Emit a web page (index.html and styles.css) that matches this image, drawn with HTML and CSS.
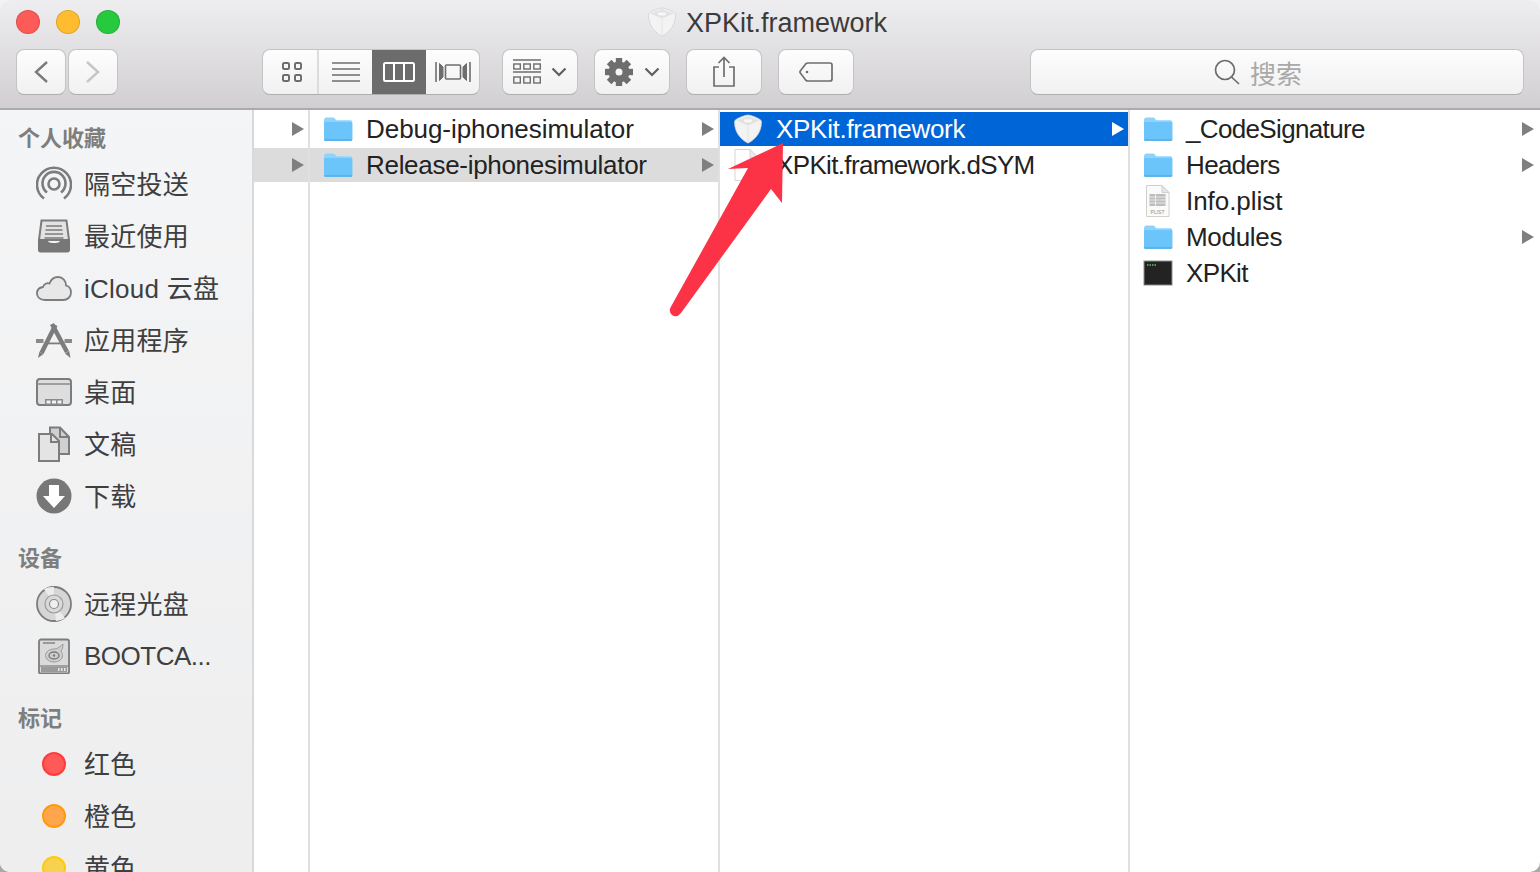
FILE: index.html
```html
<!DOCTYPE html>
<html lang="zh-CN">
<head>
  <meta charset="UTF-8">
  <meta name="viewport" content="width=device-width, initial-scale=1.0">
  <title>XPKit.framework</title>
  <link rel="stylesheet" href="styles.css">
</head>
<body>
  <svg class="defs" width="0" height="0">
    <symbol id="folder" viewBox="0 0 30 24">
      <path d="M1 3.500C1 1.500 2 .5 3.500 .5h6c1.300 0 2 .5 2.800 1.500l.9 1.200H27.500c1 0 1.800.8 1.800 1.800V22c0 1-.8 1.800-1.800 1.800H2.800C1.800 23.800 1 23 1 22z" fill="#8fd3fb"/>
      <path d="M1 6.500c0-.9.6-1.500 1.500-1.500h25c.9 0 1.800.6 1.800 1.500V22c0 1-.8 1.800-1.800 1.800H2.800C1.800 23.800 1 23 1 22z" fill="#6cc5fa"/>
      <path d="M1 22.200h28.300c0 1-.8 1.600-1.800 1.600H2.800c-1 0-1.800-.6-1.800-1.600z" fill="#55aee6"/>
    </symbol>
    <symbol id="cube" viewBox="0 0 30 30">
      <path d="M15 1C18 1 24 3.500 27 5.500 28 6.200 28.500 7 28.500 8 28.500 17 24 24 15.800 28.800 15.300 29.100 14.700 29.100 14.200 28.800 6 24 1.500 17 1.500 8 1.500 7 2 6.200 3 5.500 6 3.500 12 1 15 1z" fill="#f3f3f3" stroke="#cfcfcf" stroke-width=".7"/>
      <path d="M3.500 6.500 15 11.500 26.500 6.500 15 2z" fill="#e2e2e2"/>
      <path d="M15 11.500V28" stroke="#e4e4e4" stroke-width="1"/>
      <path d="M11 5.500h8v2.200c-2 1-6 1-8 0z" fill="#f7f7f7"/>
    </symbol>
    <symbol id="page" viewBox="0 0 26 32">
      <path d="M2 .5H17L25 8.500V31.500H2z" fill="#fff" stroke="#d5d5d5"/>
      <path d="M17 .5V8.500H25z" fill="#ececec" stroke="#d5d5d5"/>
    </symbol>
  </svg>

  <div class="window">
    <header class="toolbar">
      <div class="title-row">
        <div class="lights">
          <span class="light light-red"></span>
          <span class="light light-yellow"></span>
          <span class="light light-green"></span>
        </div>
        <div class="title">
          <svg class="title-icon" width="30" height="30"><use href="#cube"/></svg>
          <span class="title-text">XPKit.framework</span>
        </div>
      </div>
      <div class="tools">
        <div class="nav-group">
          <button class="btn btn-nav">
            <svg width="16" height="24" viewBox="0 0 16 24"><path d="M14 2 3 12l11 10" fill="none" stroke="#7b7b7b" stroke-width="2.400"/></svg>
          </button>
          <button class="btn btn-nav">
            <svg width="16" height="24" viewBox="0 0 16 24"><path d="M2 2l11 10L2 22" fill="none" stroke="#c6c6c6" stroke-width="2.400"/></svg>
          </button>
        </div>
        <div class="btn view-group">
          <span class="view view-icons">
            <svg width="22" height="22" viewBox="0 0 22 22" fill="none" stroke="#6e6e6e" stroke-width="2"><rect x="2" y="2" width="6" height="6" rx="1.200"/><rect x="14" y="2" width="6" height="6" rx="1.200"/><rect x="2" y="14" width="6" height="6" rx="1.200"/><rect x="14" y="14" width="6" height="6" rx="1.200"/></svg>
          </span>
          <span class="view view-list">
            <svg width="30" height="22" viewBox="0 0 30 22" stroke="#6e6e6e" stroke-width="1.500"><path d="M1 2h28M1 8h28M1 14h28M1 20h28"/></svg>
          </span>
          <span class="view view-active">
            <svg width="32" height="20" viewBox="0 0 32 20" fill="none" stroke="#fff" stroke-width="2"><rect x="1" y="1" width="30" height="18" rx="1.500"/><path d="M11 1v18M21 1v18"/></svg>
          </span>
          <span class="view view-flow">
            <svg width="36" height="20" viewBox="0 0 36 20" fill="none" stroke="#6e6e6e" stroke-width="1.600"><path d="M1 0v20M35 0v20"/><rect x="10.500" y="3" width="15" height="14" rx="1"/><path d="M4.500 1.500 8 5v10l-3.500 3.500zM31.500 1.500 28 5v10l3.500 3.500z" fill="#6e6e6e" stroke-width="1"/></svg>
          </span>
        </div>
        <button class="btn btn-tool">
          <svg width="28" height="26" viewBox="0 0 28 26" fill="none" stroke="#6e6e6e" stroke-width="1.400"><path d="M0 1h28M0 13h28" stroke-width="1.600"/><rect x=".8" y="5" width="6.500" height="5"/><rect x="10.800" y="5" width="6.500" height="5"/><rect x="20.800" y="5" width="6.500" height="5"/><rect x=".8" y="18" width="6.500" height="6"/><rect x="10.800" y="18" width="6.500" height="6"/><rect x="20.800" y="18" width="6.500" height="6"/></svg>
          <svg class="chev" width="16" height="10" viewBox="0 0 16 10"><path d="M1.500 1.500 8 8l6.500-6.500" fill="none" stroke="#5f5f5f" stroke-width="2.200"/></svg>
        </button>
        <button class="btn btn-tool">
          <svg width="30" height="30" viewBox="-15 -15 30 30" fill="#6e6e6e"><circle r="10.500"/><rect x="-3.200" y="-14" width="6.400" height="28"/><rect x="-3.200" y="-14" width="6.400" height="28" transform="rotate(45)"/><rect x="-3.200" y="-14" width="6.400" height="28" transform="rotate(90)"/><rect x="-3.200" y="-14" width="6.400" height="28" transform="rotate(135)"/><circle r="3.500" fill="#f6f6f6"/></svg>
          <svg class="chev" width="16" height="10" viewBox="0 0 16 10"><path d="M1.500 1.500 8 8l6.500-6.500" fill="none" stroke="#5f5f5f" stroke-width="2.200"/></svg>
        </button>
        <button class="btn btn-tool">
          <svg width="24" height="32" viewBox="0 0 24 32" fill="none" stroke="#6e6e6e" stroke-width="1.700"><path d="M7 11H2v19h20V11h-5M12 21V2M6.500 7 12 1.500 17.500 7"/></svg>
        </button>
        <button class="btn btn-tool">
          <svg width="34" height="20" viewBox="0 0 34 20" fill="none" stroke="#6e6e6e" stroke-width="1.700"><path d="M9 1h22a2 2 0 0 1 2 2v14a2 2 0 0 1-2 2H9c-1 0-1.500-.3-2.200-.8L1.500 11.200c-.7-.7-.7-1.700 0-2.400L6.800 1.800C7.500 1.300 8 1 9 1z"/><circle cx="8" cy="10" r="1.300" fill="#6e6e6e" stroke="none"/></svg>
        </button>
        <div class="btn search">
          <svg width="26" height="26" viewBox="0 0 26 26" fill="none" stroke="#6b6b6b" stroke-width="1.700"><circle cx="11" cy="11" r="9.500"/><path d="M17.500 18 25 25"/></svg>
          <span>搜索</span>
        </div>
      </div>
    </header>

    <div class="browser">
      <aside class="sidebar">
        <h4 class="side-head">个人收藏</h4>
        <div class="side-row">
          <svg class="side-icon" viewBox="0 0 36 36" fill="none" stroke="#7c7c7c" stroke-width="2.600"><path d="M8 32.500a17 17 0 1 1 20 0"/><path d="M11 26.500a11.500 11.500 0 1 1 14 0"/><circle cx="18" cy="18" r="5.500"/></svg>
          <span class="side-text">隔空投送</span>
        </div>
        <div class="side-row">
          <svg class="side-icon" viewBox="0 0 36 36"><path d="M5.500 2.500h25L33 22H3z" fill="#e3e3e3" stroke="#7c7c7c" stroke-width="2"/><path d="M10 8h16M9.500 12h17M9 16h18M8.500 20h19" stroke="#7c7c7c" stroke-width="1.500"/><path d="M2 21h9c1 3 2 4 7 4s6-1 7-4h9v11c0 1.500-1 2.500-2.500 2.500h-27C3 34.500 2 33.500 2 32z" fill="#777"/></svg>
          <span class="side-text">最近使用</span>
        </div>
        <div class="side-row">
          <svg class="side-icon" viewBox="0 0 36 36"><path d="M9 30C4 30 1 27 1 23.500S3.500 17.500 7 17c1-3 4-4.500 6.500-3.500C15 9.500 18.500 7 22 7c5 0 8 4 8 8.500 3 .8 5 3.500 5 7 0 4-3 7.500-8 7.500z" fill="#e8e8e8" stroke="#7c7c7c" stroke-width="1.800"/></svg>
          <span class="side-text">iCloud 云盘</span>
        </div>
        <div class="side-row">
          <svg class="side-icon" viewBox="0 0 36 36"><path d="M0 17h7.500v4H0zM28.500 17H36v4h-7.500z" fill="#8a8a8a"/><path d="M11 20.500h14v1.800H11z" fill="#7c7c7c"/><path d="M19.500 3 5.500 31" stroke="#7c7c7c" stroke-width="4.500" fill="none"/><path d="M16 2 31 30" stroke="#7c7c7c" stroke-width="4.500" fill="none"/><path d="M3.300 30 7.500 32 2 36zM33.200 29 29 31.500 34.500 36z" fill="#7c7c7c"/></svg>
          <span class="side-text">应用程序</span>
        </div>
        <div class="side-row">
          <svg class="side-icon" viewBox="0 0 36 36"><rect x="1" y="5" width="34" height="26" rx="3" fill="#dedede" stroke="#7c7c7c" stroke-width="2"/><path d="M1 10h34" stroke="#8a8a8a" stroke-width="1.500"/><path d="M9 25h18v6H9z" fill="#8a8a8a"/><path d="M10.500 26.500h4v3h-4zM16 26.500h4v3h-4zM21.500 26.500h4v3h-4z" fill="#f2f2f2"/></svg>
          <span class="side-text">桌面</span>
        </div>
        <div class="side-row">
          <svg class="side-icon" viewBox="0 0 36 36" stroke="#7c7c7c" stroke-width="2"><path d="M14 1.500h10L33 11v17H14z" fill="#d0d0d0"/><path d="M24 1.500V11h9" fill="none"/><path d="M3 8h13l7 7v20H3z" fill="#e4e4e4"/><path d="M15 8v8h8" fill="none"/></svg>
          <span class="side-text">文稿</span>
        </div>
        <div class="side-row">
          <svg class="side-icon" viewBox="0 0 36 36"><circle cx="18" cy="18" r="17.500" fill="#777"/><path d="M13 7h10v11h6L18 30 7 18h6z" fill="#fff"/></svg>
          <span class="side-text">下载</span>
        </div>

        <h4 class="side-head side-head-gap">设备</h4>
        <div class="side-row">
          <svg class="side-icon" viewBox="0 0 36 36" fill="none"><circle cx="18" cy="18" r="17" fill="#d6d6d6" stroke="#7c7c7c" stroke-width="1.800"/><path d="M18 18 8 3a17 17 0 0 1 10-2zM18 18l11 14a17 17 0 0 1-9 3z" fill="#ececec"/><circle cx="18" cy="18" r="9" fill="#d9d9d9" stroke="#9a9a9a" stroke-width="1.200"/><circle cx="18" cy="18" r="4.500" fill="#efefef" stroke="#8a8a8a" stroke-width="1.200"/></svg>
          <span class="side-text">远程光盘</span>
        </div>
        <div class="side-row">
          <svg class="side-icon" viewBox="0 0 36 36"><path d="M5 1.500h26a2 2 0 0 1 2 2V34a1.500 1.500 0 0 1-1.500 1.500h-27A1.500 1.500 0 0 1 3 34V3.500a2 2 0 0 1 2-2z" fill="#dadada" stroke="#7c7c7c" stroke-width="1.800"/><path d="M7 5h12" stroke="#8a8a8a" stroke-width="1.600"/><path d="M3.500 28h29" stroke="#7c7c7c" stroke-width="1.200"/><path d="M5 29h26v5H5z" fill="#9a9a9a"/><path d="M22 30h1.500v3H22zM25 30h1.500v3H25zM28 30h1.500v3H28z" fill="#e8e8e8"/><path d="M27 6c0 4-1 5-2 7 1 2 1.500 3 1.500 4.500 0 4-4 6.500-8.500 6.500S9.500 21 9.500 17.500 13.500 11 18 11c2.500 0 5-1 9-5z" fill="#cfcfcf" stroke="#9a9a9a"/><ellipse cx="18" cy="17.500" rx="5" ry="3.500" fill="none" stroke="#7c7c7c" stroke-width="1.400"/><circle cx="18" cy="17.500" r="1.200" fill="#7c7c7c"/></svg>
          <span class="side-text side-text-latin">BOOTCA...</span>
        </div>

        <h4 class="side-head side-head-gap">标记</h4>
        <div class="side-row">
          <span class="tag tag-red"></span>
          <span class="side-text">红色</span>
        </div>
        <div class="side-row">
          <span class="tag tag-orange"></span>
          <span class="side-text">橙色</span>
        </div>
        <div class="side-row">
          <span class="tag tag-yellow"></span>
          <span class="side-text">黄色</span>
        </div>
      </aside>

      <section class="col col-first">
        <div class="row"><i class="arrow"></i></div>
        <div class="row row-grey"><i class="arrow"></i></div>
      </section>

      <section class="col">
        <div class="row">
          <svg class="row-icon" width="30" height="24"><use href="#folder"/></svg>
          <span class="name name-loose">Debug-iphonesimulator</span><i class="arrow"></i>
        </div>
        <div class="row row-grey">
          <svg class="row-icon" width="30" height="24"><use href="#folder"/></svg>
          <span class="name">Release-iphonesimulator</span><i class="arrow"></i>
        </div>
      </section>

      <section class="col">
        <div class="row row-blue">
          <svg class="row-icon" width="30" height="30"><use href="#cube"/></svg>
          <span class="name">XPKit.framework</span><i class="arrow"></i>
        </div>
        <div class="row">
          <svg class="row-icon" width="26" height="32"><use href="#page"/></svg>
          <span class="name name-tight">XPKit.framework.dSYM</span>
        </div>
      </section>

      <section class="col col-last">
        <div class="row">
          <svg class="row-icon" width="30" height="24"><use href="#folder"/></svg>
          <span class="name name-tight">_CodeSignature</span><i class="arrow"></i>
        </div>
        <div class="row">
          <svg class="row-icon" width="30" height="24"><use href="#folder"/></svg>
          <span class="name name-tight">Headers</span><i class="arrow"></i>
        </div>
        <div class="row">
          <svg class="row-icon" width="30" height="32" viewBox="0 0 30 32"><path d="M3.500 .5H19l7 7v24H3.500z" fill="#fafafa" stroke="#d0d0d0"/><path d="M19 .5v7h7z" fill="#e6e6e6" stroke="#d0d0d0"/><path d="M6.500 9h16v12h-16z" fill="#bdbdbd"/><path d="M6.500 12h16M6.500 15h16M6.500 18h16M12.500 9v12" stroke="#f5f5f5" stroke-width=".8"/><text class="plist-label" x="14.500" y="28.500">PLIST</text></svg>
          <span class="name name-loose">Info.plist</span>
        </div>
        <div class="row">
          <svg class="row-icon" width="30" height="24"><use href="#folder"/></svg>
          <span class="name">Modules</span><i class="arrow"></i>
        </div>
        <div class="row">
          <svg class="row-icon" width="30" height="26" viewBox="0 0 30 26"><rect x="1" y="1" width="28" height="24" fill="#232323" stroke="#8f8f8f"/><path d="M1 24.500h28" stroke="#555"/><path d="M4 5h1.500M6.500 5H8M9 5h1.500M11.500 5H13" stroke="#5fc46a" stroke-width="1.400"/></svg>
          <span class="name name-tight">XPKit</span>
        </div>
      </section>
    </div>

    <svg class="mark" width="130" height="190" viewBox="0 0 130 190">
      <path d="M123 8 68 34 88 33 10.500 172.500Q8.500 177 12 180 16.500 183.500 21 178L111 54 122 68z" fill="#fc3346"/>
    </svg>
  </div>
</body>
</html>
```

FILE: styles.css
```css
* {
  box-sizing: border-box;
}
html, body {
  margin: 0;
  padding: 0;
  height: 100%;
  overflow: hidden;
}
body {
  background: linear-gradient(#f2f2f2 50%, #a9a9a9 50%);
  font-family: "Liberation Sans", "Noto Sans CJK SC", sans-serif;
}
.defs {
  position: absolute;
}
.window {
  position: relative;
  width: 1540px;
  height: 872px;
  border-radius: 10px;
  overflow: hidden;
  display: flex;
  flex-direction: column;
  background: #fff;
}

/* toolbar */
.toolbar {
  height: 110px;
  flex: none;
  background: linear-gradient(#eeedf0, #d1cfd1);
  border-bottom: 2px solid #ababab;
}
.title-row {
  display: grid;
  grid-template-columns: 1fr auto 1fr;
  align-items: center;
  height: 44px;
  padding: 0 16px;
  margin-bottom: 5px;
}
.lights {
  display: flex;
  gap: 16px;
}
.light {
  width: 24px;
  height: 24px;
  border-radius: 50%;
  border: 1px solid rgba(0, 0, 0, 0.12);
}
.light-red { background: #fc5b57; }
.light-yellow { background: #febc2e; }
.light-green { background: #27c93f; }
.title {
  display: flex;
  align-items: center;
  gap: 9px;
  font-size: 27px;
  color: #3b3b3b;
  margin-left: -6px;
}
.title-text {
  margin-top: 2px;
}
.tools {
  display: flex;
  padding: 0 16px;
  height: 46px;
}
.btn {
  display: flex;
  align-items: center;
  justify-content: center;
  height: 46px;
  padding: 0;
  background: linear-gradient(#fdfdfd, #f1f1f1);
  border: 1px solid #c4c4c4;
  border-bottom-color: #aeaeae;
  border-radius: 8px;
}
.nav-group {
  display: flex;
  gap: 2px;
}
.btn-nav {
  width: 50px;
}
.view-group {
  width: 218px;
  margin-left: 144px;
  margin-right: 22px;
  overflow: hidden;
  align-items: stretch;
  justify-content: flex-start;
}
.view {
  display: flex;
  align-items: center;
  justify-content: center;
}
.view-icons {
  width: 56px;
  padding-left: 3px;
  border-right: 2px solid #dcdcdc;
}
.view-list {
  width: 53px;
}
.view-active {
  width: 54px;
  background: #6c6c6c;
}
.view-flow {
  width: 53px;
}
.btn-tool {
  width: 76px;
  margin-right: 16px;
  gap: 10px;
}
.chev {
  flex: none;
}
.search {
  width: 494px;
  margin-left: auto;
  padding-right: 38px;
  gap: 10px;
  font-size: 26px;
  color: #a9a9a9;
}

/* columns */
.browser {
  flex: 1;
  display: flex;
  min-height: 0;
}
.sidebar {
  width: 254px;
  flex: none;
  padding-top: 8px;
  background: linear-gradient(#f4f5f6, #eeeeef);
  border-right: 2px solid #d9d9d9;
  overflow: hidden;
}
.side-head {
  margin: 0;
  height: 40px;
  line-height: 42px;
  padding-left: 18px;
  font-size: 22px;
  font-weight: 700;
  color: #7e7e7e;
}
.side-head-gap {
  margin-top: 16px;
}
.side-row {
  display: flex;
  align-items: center;
  height: 52px;
  padding-left: 36px;
  font-size: 26px;
  color: #3f3f3f;
}
.side-text {
  margin-bottom: 4px;
  letter-spacing: 0.25px;
}
.side-text-latin {
  margin-bottom: 0;
  letter-spacing: -0.5px;
}
.side-icon {
  width: 36px;
  height: 36px;
  margin-right: 12px;
  flex: none;
}
.tag {
  width: 24px;
  height: 24px;
  margin: 0 18px 0 6px;
  border-radius: 50%;
  border: 2px solid;
  flex: none;
}
.tag-red { background: #ff5a57; border-color: #ff3b3b; }
.tag-orange { background: #ffa64d; border-color: #ff9a0a; }
.tag-yellow { background: #f6d24f; border-color: #ffcb0a; }

.col {
  width: 410px;
  flex: none;
  padding-top: 2px;
  border-right: 2px solid #e0e0e0;
}
.col-first {
  width: 56px;
}
.col-last {
  flex: 1;
  border-right: 0;
}
.row {
  display: flex;
  align-items: center;
  height: 34px;
  margin-bottom: 2px;
  padding-left: 14px;
  font-size: 26px;
  color: #222;
  position: relative;
}
.col-first .row {
  padding-left: 0;
}
.row-icon {
  position: absolute;
  left: 13px;
  top: 50%;
  transform: translateY(-50%);
}
.plist-label {
  font-size: 5px;
  fill: #8a8a8a;
  text-anchor: middle;
}
.name {
  margin-left: 42px;
  letter-spacing: -0.3px;
}
.name-tight {
  letter-spacing: -0.65px;
}
.name-loose {
  letter-spacing: -0.05px;
}
.arrow {
  position: absolute;
  right: 4px;
  top: 10px;
  border-left: 12px solid #7f7f7f;
  border-top: 7px solid transparent;
  border-bottom: 7px solid transparent;
}
.col-last .arrow {
  right: 6px;
}
.row-grey {
  background: #dcdcdc;
}
.row-blue {
  background: #0066d8;
  color: #fff;
}
.row-blue .arrow {
  border-left-color: #fff;
}
.mark {
  position: absolute;
  left: 660px;
  top: 135px;
}
```
